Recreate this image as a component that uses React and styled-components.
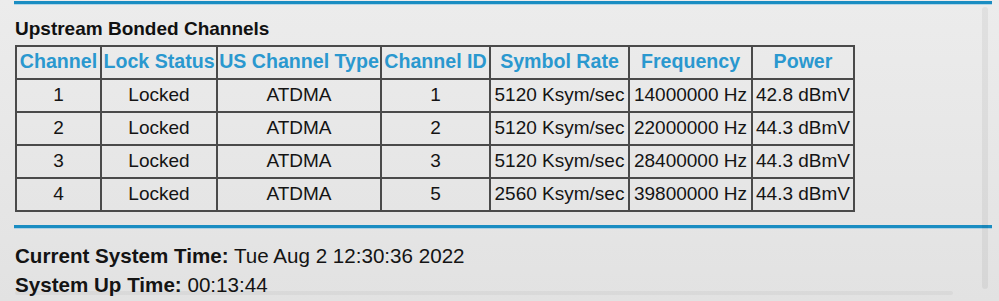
import React from "react";
import styled, { createGlobalStyle } from "styled-components";

const GlobalStyle = createGlobalStyle`
  html, body {
    margin: 0;
    padding: 0;
  }
  body {
    width: 999px;
    height: 301px;
    overflow: hidden;
    background: linear-gradient(180deg, #ececec 0%, #e6e6e6 60%, #e2e2e2 100%);
    font-family: "Liberation Sans", Arial, Helvetica, sans-serif;
    color: #111;
  }
`;

const channels = [
  { channel: 1, lock: "Locked", type: "ATDMA", id: 1, rate: "5120 Ksym/sec", freq: "14000000 Hz", power: "42.8 dBmV" },
  { channel: 2, lock: "Locked", type: "ATDMA", id: 2, rate: "5120 Ksym/sec", freq: "22000000 Hz", power: "44.3 dBmV" },
  { channel: 3, lock: "Locked", type: "ATDMA", id: 3, rate: "5120 Ksym/sec", freq: "28400000 Hz", power: "44.3 dBmV" },
  { channel: 4, lock: "Locked", type: "ATDMA", id: 5, rate: "2560 Ksym/sec", freq: "39800000 Hz", power: "44.3 dBmV" },
];

const columns = [
  { label: "Channel", width: 85 },
  { label: "Lock Status", width: 116 },
  { label: "US Channel Type", width: 164 },
  { label: "Channel ID", width: 109 },
  { label: "Symbol Rate", width: 139 },
  { label: "Frequency", width: 123 },
  { label: "Power", width: 102 },
];

const App = () => {
  return (
    <>
      <GlobalStyle />
      <Page>
        <Rule $top={1} />
        <SectionTitle>Upstream Bonded Channels</SectionTitle>
        <ChannelTable>
          <colgroup>
            {columns.map((c) => (
              <col key={c.label} style={{ width: c.width }} />
            ))}
          </colgroup>
          <thead>
            <tr>
              {columns.map((c) => (
                <HeadCell key={c.label}>{c.label}</HeadCell>
              ))}
            </tr>
          </thead>
          <tbody>
            {channels.map((row) => (
              <tr key={row.channel}>
                <Cell>{row.channel}</Cell>
                <Cell>{row.lock}</Cell>
                <Cell>{row.type}</Cell>
                <Cell>{row.id}</Cell>
                <Cell>{row.rate}</Cell>
                <Cell>{row.freq}</Cell>
                <Cell>{row.power}</Cell>
              </tr>
            ))}
          </tbody>
        </ChannelTable>
        <Rule $top={13} />
        <StatusBlock>
          <StatusLine>
            <b>Current System Time:</b> Tue Aug 2 12:30:36 2022
          </StatusLine>
          <StatusLine>
            <b>System Up Time:</b> 00:13:44
          </StatusLine>
        </StatusBlock>
        <VScroll />
        <HScroll />
      </Page>
    </>
  );
};

export default App;

const Page = styled.div`
  position: relative;
  width: 978px;
  height: 301px;
  padding-left: 14px;
`;

const Rule = styled.div`
  margin-top: ${(props) => props.$top}px;
  height: 3px;
  width: 978px;
  background: #1a8dc2;
  box-shadow: 0 1px 0 rgba(120, 190, 225, 0.5);
`;

const SectionTitle = styled.h3`
  margin: 14px 0 5px 1px;
  font-size: 19px;
  line-height: 22px;
  font-weight: bold;
  color: #111;
`;

const ChannelTable = styled.table`
  margin-left: 1px;
  width: 840px;
  table-layout: fixed;
  border-collapse: separate;
  border-spacing: 0;
  border: 1px solid #4a4a4a;
  font-size: 19px;
`;

const HeadCell = styled.th`
  box-sizing: border-box;
  height: 33px;
  padding: 0 0 2px;
  line-height: 29px;
  border: 1px solid #4a4a4a;
  color: #2a98cf;
  font-size: 19.6px;
  font-weight: bold;
  text-align: center;
  white-space: nowrap;
`;

const Cell = styled.td`
  box-sizing: border-box;
  height: 33px;
  padding: 0 0 1px;
  line-height: 30px;
  border: 1px solid #4a4a4a;
  color: #141414;
  text-align: center;
  white-space: nowrap;
`;

const StatusBlock = styled.div`
  margin: 13px 0 0 1px;
  font-size: 20.6px;
  line-height: 29px;
`;

const StatusLine = styled.div`
  color: #141414;

  & b {
    font-weight: bold;
  }
`;

/* faint overlay scrollbars of the frame */
const VScroll = styled.div`
  position: absolute;
  left: 982px;
  top: 6px;
  width: 6px;
  height: 282px;
  border-radius: 3px;
  background: rgba(0, 0, 0, 0.05);
`;

const HScroll = styled.div`
  position: absolute;
  left: 15px;
  top: 290px;
  width: 938px;
  height: 4px;
  border-radius: 2px;
  background: rgba(0, 0, 0, 0.04);
`;
